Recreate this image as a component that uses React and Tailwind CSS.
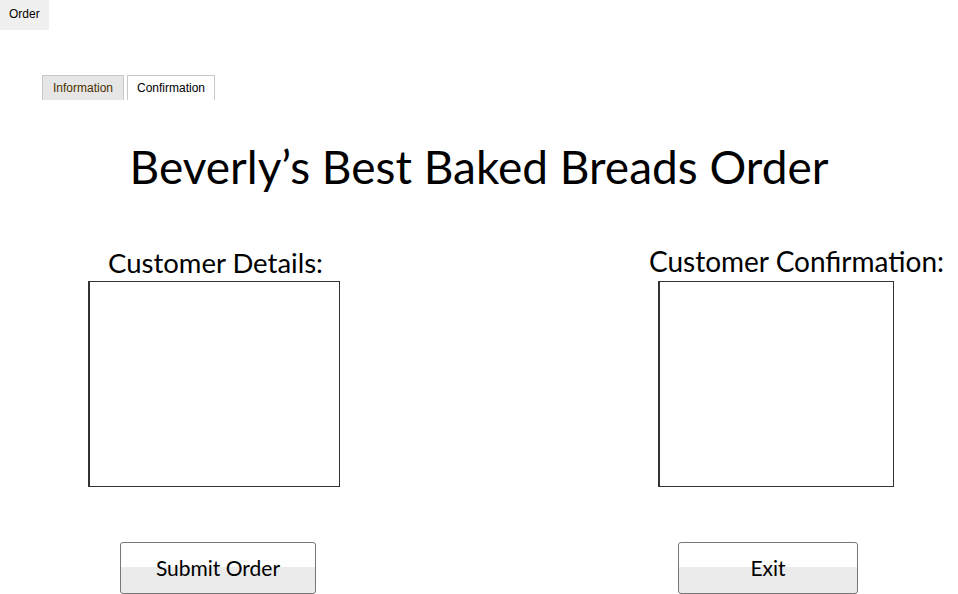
export default function App() {
    const calibri = { fontFamily: 'Lato, "Open Sans", sans-serif' }

    return (
        <div className="w-[958px] h-[594px] bg-white relative overflow-hidden text-black" style={calibri}>
            <div className="w-[49px] h-[30px] bg-[#f0f0f0] text-[12px] pl-[9px] pt-[8px] leading-none font-['Liberation_Sans',sans-serif]">Order</div>

            <div className="flex gap-[3px] ml-[42px] mt-[45px] h-[25px] items-end font-['Liberation_Sans',sans-serif] text-[12px]">
                <div className="h-[25px] w-[82px] flex items-center justify-center bg-[#e6e6e6] border border-b-0 border-[#c8c8c8] text-[#4a3000]">Information</div>
                <div className="h-[25px] w-[88px] flex items-center justify-center bg-white border border-b-0 border-[#c8c8c8]">Confirmation</div>
            </div>

            <h1 className="text-center text-[46px] leading-none mt-[44px]">Beverly’s Best Baked Breads Order</h1>

            <div className="flex mt-[61px]">
                <div className="ml-[88px] w-[252px] flex flex-col">
                    <p className="text-[27.5px] leading-none ml-[20px] h-[32px] -mt-[2px]">Customer Details:</p>
                    <div className="h-[206px] border border-[#333] border-l-2"></div>
                    <button className="mt-[55px] ml-[32px] w-[196px] h-[52px] rounded-[3px] border border-[#777] bg-[linear-gradient(#fefefe_0%,#fefefe_48%,#ebebeb_48%,#ebebeb_100%)] text-[21px]">Submit Order</button>
                </div>
                <div className="ml-[309px] w-[300px] flex flex-col">
                    <p className="text-[28px] leading-none h-[32px] -mt-[4px]">Customer Confirmation:</p>
                    <div className="ml-[9px] w-[236px] h-[206px] border border-[#333] border-l-2 mt-[2px]"></div>
                    <button className="mt-[55px] ml-[29px] w-[180px] h-[52px] rounded-[3px] border border-[#777] bg-[linear-gradient(#fefefe_0%,#fefefe_48%,#ebebeb_48%,#ebebeb_100%)] text-[21px]">Exit</button>
                </div>
            </div>
        </div>
    )
}
